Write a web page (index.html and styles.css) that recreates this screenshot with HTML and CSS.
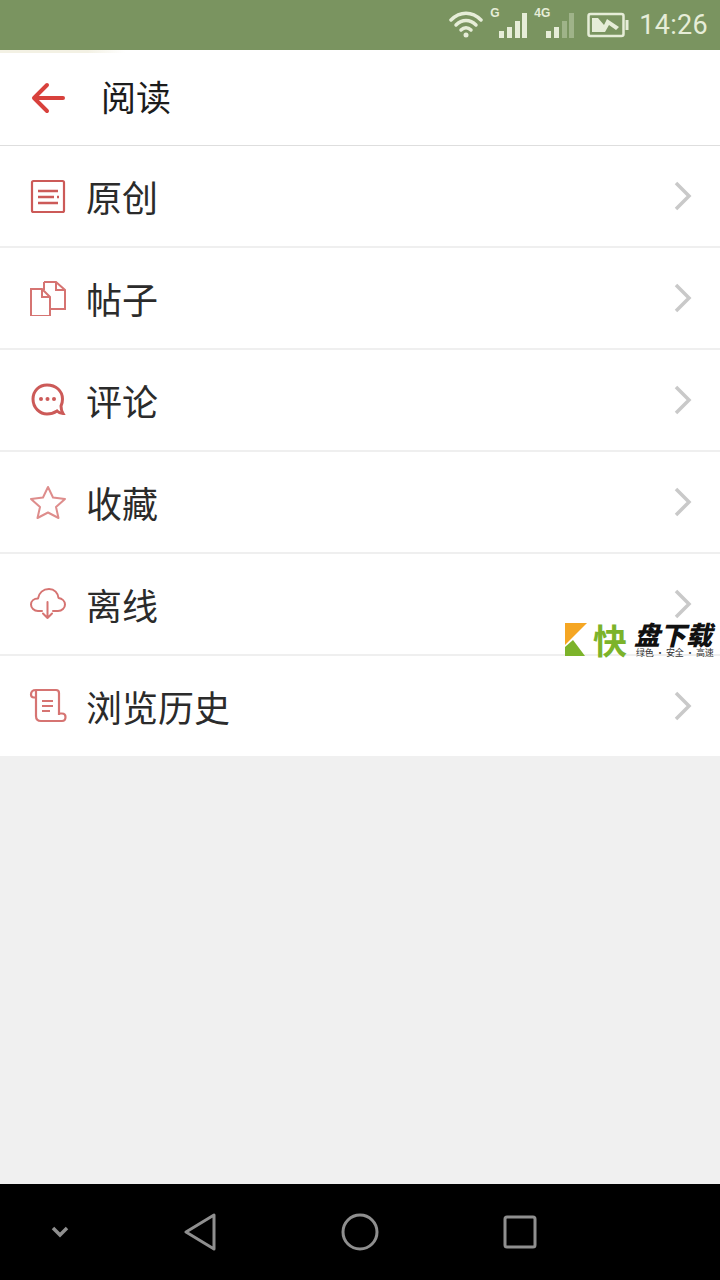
FILE: index.html
```html
<!DOCTYPE html>
<html lang="zh-CN">
<head>
<meta charset="utf-8">
<title>阅读</title>
<link rel="stylesheet" href="styles.css">
</head>
<body>
<div class="phone">
  <div class="status">
    <svg class="wifi" width="34" height="28" viewBox="0 0 34 28" fill="none" stroke="#e6edd8" stroke-width="3.500" stroke-linecap="round"><path d="M2 10C11 1 23 1 32 10"/><path d="M7 15C13 9 21 9 27 15"/><path d="M12 20C15 17 19 17 22 20"/><circle cx="17" cy="25" r="2.500" fill="#e6edd8" stroke="none"/></svg>
    <div class="signal">
      <span class="net">G</span>
      <svg width="30" height="28" viewBox="0 0 30 28" fill="#e6edd8"><rect x="1" y="20" width="5" height="7"/><rect x="9" y="16" width="5" height="11"/><rect x="17" y="10" width="5" height="17"/><rect x="24" y="2" width="5" height="25"/></svg>
    </div>
    <div class="signal">
      <span class="net net-4g">4G</span>
      <svg width="30" height="28" viewBox="0 0 30 28" fill="#e6edd8"><rect x="1" y="20" width="5" height="7"/><rect x="9" y="16" width="5" height="11"/><rect x="17" y="10" width="5" height="17" opacity=".35"/><rect x="24" y="2" width="5" height="25" opacity=".35"/></svg>
    </div>
    <svg class="battery" width="42" height="26" viewBox="0 0 42 26"><rect x="1.500" y="2" width="35" height="22" rx="2" fill="none" stroke="#e6edd8" stroke-width="2.500"/><rect x="38.500" y="8" width="3" height="10" fill="#e6edd8"/><path d="M5 6H11L17 13L20 7L32 15L29 18L22 13L18 20H5Z" fill="#e6edd8"/></svg>
    <span class="time">14:26</span>
  </div>

  <header class="topbar">
    <svg class="back" width="34" height="32" viewBox="0 0 34 32" fill="none" stroke="#d8413c" stroke-width="4" stroke-linecap="round" stroke-linejoin="round"><path d="M32 16H4"/><path d="M16 3L3 16L16 29"/></svg>
    <h1 class="title">阅读</h1>
  </header>

  <main class="list">
    <a class="row">
      <svg class="icon" width="38" height="36" viewBox="0 0 38 36" fill="none" stroke="#cc5a58"><rect x="3" y="3" width="32" height="31" rx="1.500" stroke-width="2.200"/><path d="M9 13H29M9 19H25M28 19H30M9 25H29" stroke-width="2.600"/></svg>
      <span class="label">原创</span>
      <svg class="chev" width="18" height="30" viewBox="0 0 18 30" fill="none" stroke="#c9c9c9" stroke-width="3.500"><path d="M2 2L15 15L2 28"/></svg>
    </a>
    <a class="row">
      <svg class="icon" width="38" height="36" viewBox="0 0 38 36" fill="none" stroke="#d67472" stroke-width="2"><path d="M2 9H13L21 17V36H2Z"/><path d="M13 9V17H21"/><path d="M15 2H27L36 10V29H21"/><path d="M15 2V10M27 2V10H36"/></svg>
      <span class="label">帖子</span>
      <svg class="chev" width="18" height="30" viewBox="0 0 18 30" fill="none" stroke="#c9c9c9" stroke-width="3.500"><path d="M2 2L15 15L2 28"/></svg>
    </a>
    <a class="row">
      <svg class="icon" width="38" height="36" viewBox="0 0 38 36" fill="none" stroke="#cc5a58" stroke-width="3"><path d="M18 3C10 3 4 9 4 17C4 26 11 32 18 32C22 32 25 31 28 29C30 31 32 31.500 34 31.500C32.500 29 32 27 32 24C33 22 33.500 19.500 33.500 17C33.500 9 27 3 18 3Z"/><circle cx="12" cy="17" r="2" fill="#cc5a58" stroke="none"/><circle cx="18.500" cy="17" r="2" fill="#cc5a58" stroke="none"/><circle cx="25" cy="17" r="2" fill="#cc5a58" stroke="none"/></svg>
      <span class="label">评论</span>
      <svg class="chev" width="18" height="30" viewBox="0 0 18 30" fill="none" stroke="#c9c9c9" stroke-width="3.500"><path d="M2 2L15 15L2 28"/></svg>
    </a>
    <a class="row">
      <svg class="icon" width="38" height="36" viewBox="0 0 38 36" fill="none" stroke="#de8d8c" stroke-width="2" stroke-linejoin="round"><path d="M19 3L24 13.500L36 15L27 23L29.500 34L19 28.500L8.500 34L11 23L2 15L14 13.500Z"/></svg>
      <span class="label">收藏</span>
      <svg class="chev" width="18" height="30" viewBox="0 0 18 30" fill="none" stroke="#c9c9c9" stroke-width="3.500"><path d="M2 2L15 15L2 28"/></svg>
    </a>
    <a class="row">
      <svg class="icon" width="38" height="36" viewBox="0 0 38 36" fill="none" stroke="#d67472" stroke-width="2" stroke-linecap="round" stroke-linejoin="round"><path d="M13 25H9C5 25 2 22 2 18.500C2 15 5 12.500 9 12.500C10 7 14 3 20 3C25.500 3 29 7 29.500 12C33 12.500 36 15 36 18.500C36 22 33 25 29 25H24"/><path d="M18.500 16V32M14 27.500L18.500 32L23 27.500"/></svg>
      <span class="label">离线</span>
      <svg class="chev" width="18" height="30" viewBox="0 0 18 30" fill="none" stroke="#c9c9c9" stroke-width="3.500"><path d="M2 2L15 15L2 28"/></svg>
    </a>
    <a class="row">
      <svg class="icon" width="38" height="36" viewBox="0 0 38 36" fill="none" stroke="#d67472" stroke-width="2.200" stroke-linejoin="round"><path d="M7 2H27C29 2 30 3.500 30 5V27"/><path d="M7 2C3.500 2 2 4 2 6.500C2 8 3 9.500 5 9.500H7"/><path d="M7 2V28C7 31 9 33 12 33H33C35.500 33 36.500 31 36.500 29C36.500 27 35 25.500 33 25.500H30"/><path d="M13 13H24M13 18H24M13 23H21"/></svg>
      <span class="label">浏览历史</span>
      <svg class="chev" width="18" height="30" viewBox="0 0 18 30" fill="none" stroke="#c9c9c9" stroke-width="3.500"><path d="M2 2L15 15L2 28"/></svg>
    </a>
  </main>

  <div class="empty"></div>

  <nav class="navbar">
    <svg class="nav-hide" width="20" height="14" viewBox="0 0 20 14" fill="none" stroke="#8f8f8f" stroke-width="3.500"><path d="M3 3L10 10L17 3"/></svg>
    <svg class="nav-back" width="34" height="38" viewBox="0 0 34 38" fill="none" stroke="#8f8f8f" stroke-width="3" stroke-linejoin="round"><path d="M31 2V36L3 19Z"/></svg>
    <svg class="nav-home" width="38" height="38" viewBox="0 0 38 38" fill="none" stroke="#8f8f8f" stroke-width="3"><circle cx="19" cy="19" r="17"/></svg>
    <svg class="nav-recent" width="34" height="34" viewBox="0 0 34 34" fill="none" stroke="#8f8f8f" stroke-width="3"><rect x="2" y="2" width="30" height="30" rx="2"/></svg>
  </nav>

  <div class="watermark">
    <svg class="wm-logo" width="22" height="33" viewBox="0 0 22 33"><path d="M0 0H22L5 17L0 22Z" fill="#f5a623"/><path d="M0 33V24L8 17L20 33Z" fill="#7cb32a"/></svg>
    <span class="wm-kuai">快</span>
    <div class="wm-text">
      <span class="wm-name">盘下载</span>
      <span class="wm-sub">绿色 · 安全 · 高速</span>
    </div>
  </div>
</div>
</body>
</html>
```

FILE: styles.css
```css
* { box-sizing: border-box; }
html, body { margin: 0; padding: 0; }
body { font-family: "Noto Sans CJK SC", "Noto Sans", sans-serif; background: #f0f0f0; }

.phone {
  position: relative;
  width: 720px;
  height: 1280px;
  display: flex;
  flex-direction: column;
  overflow: hidden;
}

.status {
  position: relative;
  height: 50px;
  flex: none;
  background: #7a9460;
  display: flex;
  align-items: center;
  justify-content: flex-end;
  padding-right: 12px;
  color: #e6edd8;
}
.status::after {
  content: "";
  position: absolute;
  left: 0;
  top: 50px;
  width: 125px;
  height: 3px;
  background: linear-gradient(to right, #f3f1e4 70%, #ffffff);
  z-index: 1;
}
.wifi { margin-right: 15px; margin-top: -2px; }
.signal { position: relative; display: flex; margin-right: 17px; }
.signal + .signal { margin-right: 12px; }
.net {
  position: absolute;
  left: -8px;
  top: -5px;
  font: bold 12px/14px "Liberation Sans", sans-serif;
}
.net-4g { left: -11px; }
.battery { margin-right: 10px; }
.time {
  font: 27px/50px Roboto, sans-serif;
  letter-spacing: 0.3px;
}

.topbar {
  height: 96px;
  flex: none;
  background: #fff;
  border-bottom: 1px solid #dedede;
  display: flex;
  align-items: center;
  padding-left: 31px;
}
.title {
  margin: -3px 0 0 36px;
  font-size: 35px;
  font-weight: 400;
  line-height: 50px;
  color: #1c1c1c;
}

.list { flex: none; display: flex; flex-direction: column; }
.row {
  height: 102px;
  background: #fff;
  border-bottom: 2px solid #efefef;
  display: flex;
  align-items: center;
  padding: 0 28px 0 29px;
}
.row:last-child { border-bottom: 0; height: 100px; }
.icon { flex: none; }
.label {
  margin: -1px 0 0 19px;
  font-size: 36px;
  line-height: 50px;
  color: #2b2b2b;
  flex: 1;
}
.chev { flex: none; }

.empty { flex: 1; background: #f0f0f0; }

.navbar {
  height: 96px;
  flex: none;
  background: #000;
  position: relative;
  display: grid;
  grid-template-columns: 120px 160px 160px 160px 120px;
  align-items: center;
  justify-items: center;
}

.watermark {
  position: absolute;
  left: 565px;
  top: 623px;
  display: flex;
  align-items: flex-start;
}
.wm-kuai {
  margin-left: 6px;
  font-size: 34px;
  line-height: 33px;
  font-weight: 700;
  color: #7cb32a;
}
.wm-text { display: flex; flex-direction: column; margin-left: 7px; }
.wm-name {
  font-size: 26px;
  line-height: 22px;
  font-weight: 900;
  font-style: italic;
  color: #111;
  white-space: nowrap;
}
.wm-sub {
  margin: 3px 0 0 2px;
  font-size: 9px;
  line-height: 10px;
  letter-spacing: -0.2px;
  color: #333;
  white-space: nowrap;
}
```
